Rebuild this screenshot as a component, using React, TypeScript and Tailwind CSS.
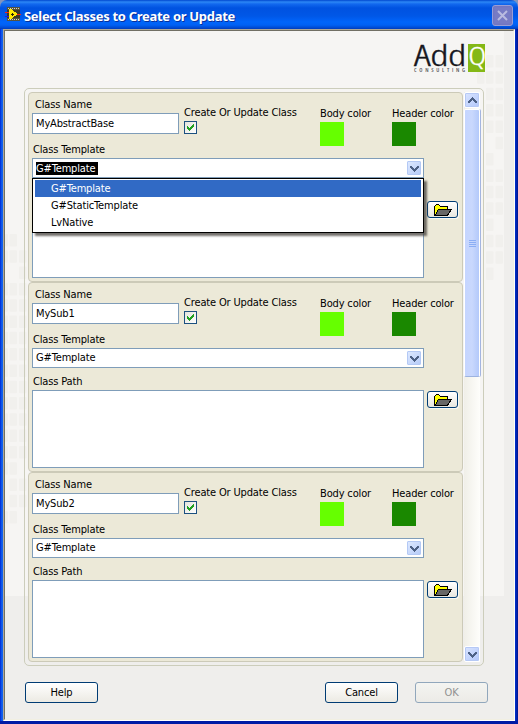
import React from "react";

const leftTileGaps = ["0-2", "2-0", "2-1", "14-2", "15-0", "16-0", "17-2", "12-3"];

function Backdrop() {
  const tiles: React.ReactElement[] = [];
  for (let r = 0; r < 18; r++) {
    [5, 9.5, 19].forEach((x, c) => {
      if (leftTileGaps.includes(r + "-" + c)) return;
      tiles.push(
        <rect key={"l" + r + "-" + c} x={x} y={234 + r * 16.3} width={c === 0 ? 3 : 7.5} height={12.5} rx={1} fill="#f1f0ed" />,
      );
    });
  }
  for (let r = 0; r < 14; r++) {
    [477, 486, 495.5].forEach((x, c) => {
      if ((c === 0 && r > 1) || (c === 2 && (r === 6 || r === 10 || r === 13)) || (c === 1 && r === 5)) return;
      tiles.push(
        <rect key={"r" + r + "-" + c} x={x} y={55 + r * 16.35} width={7.5} height={12.5} rx={1} fill="#f1f0ed" />,
      );
    });
  }
  return (
    <svg className="pointer-events-none absolute left-0 top-0" width="518" height="724">
      <rect x="5" y="31" width="508" height="688" fill="#efeeec" />
      <rect x="5" y="31" width="499" height="565" fill="#f6f5f3" />
      {tiles}
    </svg>
  );
}

function Chevron({ up = false }: { up?: boolean }) {
  return (
    <svg width="9" height="7" viewBox="0 0 9 7" className={up ? "rotate-180" : ""} shapeRendering="crispEdges">
      <path d="M0 1h2v1h1v1h1v1h1v-1h1v-1h1v-1h2v2h-1v1h-1v1h-1v1h-1v1h-1v-1h-1v-1h-1v-1h-1v-1h-1z" fill="#4d6185" />
    </svg>
  );
}

function FolderButton() {
  return (
    <button className="ml-[3px] mt-px flex h-[17px] w-[31px] items-center justify-center rounded-[3px] border border-[#003c74] bg-linear-to-b from-white to-[#e8e6df] shadow-[1px_1px_0_#f8f7f2]">
      <svg width="18" height="12" viewBox="0 0 18 12" shapeRendering="crispEdges">
        <path d="M0 2h1v-1h1v-1h3v1h1v1h8v3h4v1h-1v2h-1v1h-1v2h-1v1h-14z" fill="#000" />
        <path d="M1 2h1v-1h3v1h1v1h7v2h-9v1h-1v2h-1v2h-1z" fill="#ffff00" />
        <path d="M4 6h12v1h-1v2h-1v1h-1v1h-11v-1h1v-2h1z" fill="#666666" />
      </svg>
    </button>
  );
}

function Label({ children, className = "" }: { children?: React.ReactNode; className?: string }) {
  return <div className={"h-[14px] whitespace-nowrap leading-[16px] " + className}>{children}</div>;
}

function TemplateMenu() {
  return (
    <div className="absolute left-[-1px] top-[19px] z-10 h-[55px] w-[392px] border border-black bg-white px-[2px] pt-px leading-[17px] shadow-[3px_3px_2px_rgba(70,65,60,0.75)]">
      <div className="h-[17px] bg-[#316ac5] pl-[16px] text-white">G#Template</div>
      <div className="h-[17px] pl-[16px]">G#StaticTemplate</div>
      <div className="h-[17px] pl-[16px]">LvNative</div>
    </div>
  );
}

function ClassPanel({ name, open = false }: { name: string; open?: boolean }) {
  return (
    <section className="h-[190px] w-[435px] rounded-[4px] border border-[#cccab8] bg-[#ece9d8] pl-[3px]">
      <div className="flex h-[49px]">
        <div className="w-[147px] pt-[4px]">
          <Label className="pl-[3px]">Class Name</Label>
          <div className="mt-[2px] h-[21px] border border-[#7f9db9] bg-white pl-[3px] leading-[19px]">{name}</div>
        </div>
        <div className="ml-[5px] w-[136px] pt-[12px]">
          <Label>Create Or Update Class</Label>
          <div className="mt-[2px] flex size-[13px] items-center justify-center border border-[#1c5180] bg-linear-to-br from-[#e3e3dc] to-white">
            <svg width="7" height="7" viewBox="0 0 7 7" shapeRendering="crispEdges">
              <path d="M0 2h1v1h1v1h1v-1h1v-1h1v-1h1v-1h1v3h-1v1h-1v1h-1v1h-1v1h-1v-1h-1v-1h-1z" fill="#21a121" />
            </svg>
          </div>
        </div>
        <div className="w-[72px] pt-[13px]">
          <Label>Body color</Label>
          <div className="mt-[2px] size-[24px] bg-[#66ff00]" />
        </div>
        <div className="pt-[13px]">
          <Label>Header color</Label>
          <div className="mt-[2px] size-[24px] bg-[#1a8800]" />
        </div>
      </div>
      <Label className="pl-px">Class Template</Label>
      <div className="relative mt-[2px] flex h-[20px] w-[392px] items-center justify-between border border-[#7f9db9] bg-white pl-[3px] pr-[2px]">
        <span className={open ? "h-[13px] w-[62px] bg-black leading-[13px] text-white" : "leading-[18px]"}>G#Template</span>
        <span className="flex size-[14px] items-center justify-center rounded-[1px] border border-[#b4c9f5] bg-linear-to-br from-[#dce8ff] to-[#b7ccf8]">
          <Chevron />
        </span>
        {open && <TemplateMenu />}
      </div>
      <Label className="mt-[6px] pl-px">{open ? null : "Class Path"}</Label>
      <div className="mt-[2px] flex h-[78px] items-start">
        <div className="h-[78px] w-[392px] border border-[#7f9db9] bg-white" />
        <FolderButton />
      </div>
    </section>
  );
}

function ScrollBar() {
  return (
    <div className="ml-px flex h-[570px] w-[16px] flex-col justify-between bg-linear-to-r from-[#f0efe8] to-[#fefefb]">
      <div>
        <div className="flex h-[16px] items-center justify-center rounded-[2px] border border-white bg-linear-to-br from-[#dae5ff] to-[#b2c7fa] shadow-[inset_0_0_0_1px_#b6c9f5]">
          <Chevron up />
        </div>
        <div className="mt-px flex h-[268px] flex-col items-center justify-center gap-px rounded-[2px] border border-white border-b-[#9db3df] bg-linear-to-r from-[#c5d5ff] via-[#c9d8fd] to-[#b3c9fa] shadow-[1px_0_0_#a4b5df]">
          <i className="h-px w-[7px] bg-[#8baef5]" />
          <i className="h-px w-[7px] bg-[#8baef5]" />
          <i className="h-px w-[7px] bg-[#8baef5]" />
          <i className="h-px w-[7px] bg-[#8baef5]" />
        </div>
      </div>
      <div className="flex h-[16px] items-center justify-center rounded-[2px] border border-white bg-linear-to-br from-[#dae5ff] to-[#b2c7fa] shadow-[inset_0_0_0_1px_#b6c9f5]">
        <Chevron />
      </div>
    </div>
  );
}

function Logo() {
  return (
    <svg className="ml-[409px] mt-[13px] block overflow-visible" width="72" height="30" viewBox="0 0 72 30">
      <text x="0" y="22" fontFamily="'Open Sans', sans-serif" fontWeight="300" fontSize="30" textLength="52" lengthAdjust="spacingAndGlyphs" fill="#15151c" stroke="#15151c" strokeWidth="0.4">Add</text>
      <text x="0" y="28" fontFamily="'Open Sans', sans-serif" fontWeight="600" fontSize="5.6" textLength="51" fill="#55555a">CONSULTING</text>
      <rect x="54" y="0" width="17" height="28" fill="#84b816" />
      <text x="54.2" y="20.5" fontFamily="'Open Sans', sans-serif" fontWeight="300" fontSize="26" textLength="17.8" lengthAdjust="spacingAndGlyphs" fill="#fff" stroke="#fff" strokeWidth="0.3">Q</text>
    </svg>
  );
}

function AppIcon() {
  return (
    <svg className="mt-[7px]" width="16" height="14" viewBox="0 0 16 14" shapeRendering="crispEdges">
      <rect x="2" y="0" width="13" height="14" fill="#55533f" />
      <path d="M3 1.5h11M3 12.5h11" stroke="#d6d4c0" strokeDasharray="1 1" />
      <rect x="2" y="3" width="13" height="8" fill="#3a3828" />
      <path d="M4 2h2l7 5-7 5h-2z" fill="#ffe800" />
      <path d="M6 7.5h3M7.5 6v3" stroke="#252200" />
      <path d="M0 5.5h4M12 7.5h4" stroke="#f22516" />
      <path d="M0 9.5h4" stroke="#1717ef" />
    </svg>
  );
}

function TitleBar() {
  return (
    <header className="flex h-[29px] justify-between rounded-t-[7px] bg-[linear-gradient(to_bottom,#0047cf_0px,#2c87f5_2px,#1268ee_4px,#0052e0_8px,#0057e7_16px,#0065fb_22px,#0061f4_25px,#0048cf_28px,#003ab8_29px)] pl-[5px] pr-[5px]">
      <div className="flex">
        <AppIcon />
        <h1 className="ml-[3px] mt-[8px] whitespace-nowrap font-['Noto_Sans',sans-serif] text-[13px] font-bold leading-[16px] tracking-[-0.3px] text-white [text-shadow:1px_1px_0_#08309a]">
          Select Classes to Create or Update
        </h1>
      </div>
      <div className="mt-[5px] flex size-[21px] items-center justify-center rounded-[3px] border border-[#9a9dd4] bg-[#777bc4] shadow-[inset_0_0_2px_#696dbd]">
        <svg width="11" height="11" viewBox="0 0 11 11">
          <path d="M1 1l9 9M10 1l-9 9" stroke="#b9bbe0" strokeWidth="2" />
        </svg>
      </div>
    </header>
  );
}

const dialogButton =
  "flex h-[21px] w-[73px] items-center justify-center rounded-[3px] border bg-linear-to-b pt-[2px] ";

export default function App() {
  return (
    <div className="relative h-[724px] w-[518px] overflow-hidden bg-[#8294bd] font-['DejaVu_Sans_Condensed','DejaVu_Sans',sans-serif] text-[11px] tracking-[-0.15px] text-black [font-stretch:condensed]">
      <TitleBar />
      <div className="h-[695px] bg-[linear-gradient(to_right,#0019cf_0px,#0852e8_1px,#1664ee_3px,#0040d8_4px,#0040d8_514px,#0028bd_516px,#00138c_518px)] pb-[3px] pl-[3px] pr-[3px] shadow-[inset_0_-3px_0_#001aa5]">
        <div className="h-[692px] border border-b-white border-l-[#aca899] border-r-white border-t-[#aca899]">
          <div className="h-[690px] border border-b-[#f1efe2] border-l-[#716f64] border-r-[#f1efe2] border-t-[#716f64]" />
        </div>
      </div>
      <div className="absolute inset-0">
        <Backdrop />
        <main className="relative pl-[5px] pt-[31px]">
          <Logo />
          <div className="ml-[19px] mt-[14px] flex h-[578px] w-[460px] rounded-[5px] border border-[#cccdbb] pl-[3px] pt-[3px]">
            <div>
              <ClassPanel name="MyAbstractBase" open />
              <ClassPanel name="MySub1" />
              <ClassPanel name="MySub2" />
            </div>
            <ScrollBar />
          </div>
          <footer className="mt-[16px] flex pl-[20px]">
            <button className={dialogButton + "border-[#003c74] from-white to-[#eceae3]"}>Help</button>
            <button className={dialogButton + "ml-[227px] border-[#003c74] from-white to-[#eceae3]"}>Cancel</button>
            <button className={dialogButton + "ml-[17px] border-[#91a7bc] from-[#f4f4f1] to-[#ecebe7] text-[#919191]"}>OK</button>
          </footer>
        </main>
      </div>
    </div>
  );
}
